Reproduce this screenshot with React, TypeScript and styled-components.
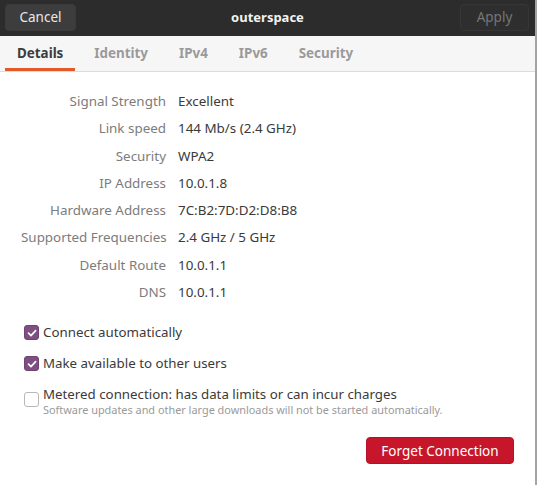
import React from "react";
import styled, { createGlobalStyle } from "styled-components";

const Global = createGlobalStyle`
  html, body { margin: 0; padding: 0; background: #ffffff; }
  body { font-family: "Noto Sans", "Open Sans", sans-serif; }
  * { box-sizing: border-box; }
`;

const Page = styled.div`
  width: 540px;
  height: 485px;
  display: flex;
  background: #ffffff;
`;

const Dialog = styled.div`
  width: 537px;
  height: 485px;
  border-right: 2px solid #a3a3a3;
  display: flex;
  flex-direction: column;
  background: #ffffff;
`;

const HeaderBar = styled.div`
  height: 36px;
  background: #2c2c2c;
  display: flex;
  align-items: center;
  justify-content: space-between;
  padding: 0 6px 2px 5px;
  position: relative;
`;

const HeaderButton = styled.button<{ $disabled?: boolean }>`
  height: 27px;
  width: ${(p) => (p.$disabled ? "69px" : "71px")};
  padding: 0;
  border-radius: 4px;
  border: 1px solid ${(p) => (p.$disabled ? "#363636" : "#3b3b3b")};
  background: ${(p) => (p.$disabled ? "#2e2e2e" : "#3d3d3d")};
  color: ${(p) => (p.$disabled ? "#767676" : "#e8e8e8")};
  font-family: inherit;
  font-size: 13.5px;
`;

const Title = styled.div`
  position: absolute;
  left: 0;
  right: 0;
  top: 8px;
  text-align: center;
  color: #f2f2f2;
  font-weight: 700;
  font-size: 13px;
  pointer-events: none;
`;

const TabBar = styled.div`
  height: 36px;
  background: #f6f6f6;
  border-bottom: 1px solid #dcdcdc;
  display: flex;
  padding-left: 5px;
`;

const Tab = styled.div<{ $active?: boolean }>`
  height: 100%;
  display: flex;
  align-items: center;
  padding: 2px 12px 0 12px;
  margin-right: 7px;
  font-size: 13.4px;
  font-weight: 700;
  color: ${(p) => (p.$active ? "#3c3c3c" : "#9a9a9a")};
  border-bottom: 3px solid ${(p) => (p.$active ? "#e05a2a" : "transparent")};
`;

const Content = styled.div`
  flex: 1;
  display: flex;
  flex-direction: column;
  padding: 19px 21px 0 21px;
`;

const InfoGrid = styled.div`
  display: grid;
  grid-template-columns: 145px auto;
  column-gap: 12px;
  row-gap: 7px;
  font-size: 13.4px;
  line-height: 20.3px;
`;

const Label = styled.div`
  text-align: right;
  color: #7c7c7c;
  white-space: nowrap;
`;

const Value = styled.div`
  color: #3a3a3a;
  white-space: nowrap;
`;

const Checks = styled.div`
  margin-top: 20px;
  display: flex;
  flex-direction: column;
  gap: 10px;
  padding-left: 3px;
`;

const CheckRow = styled.div<{ $center?: boolean }>`
  display: flex;
  align-items: ${(p) => (p.$center ? "center" : "flex-start")};
  gap: 4px;
`;

const Box = styled.div<{ $checked?: boolean }>`
  width: 15px;
  height: 15px;
  margin-top: ${(p) => (p.$checked ? "3px" : "0")};
  flex: none;
  border-radius: 3px;
  background: ${(p) => (p.$checked ? "#7d4f82" : "#ffffff")};
  border: 1px solid ${(p) => (p.$checked ? "#6e4473" : "#b8b8b8")};
  display: flex;
  align-items: center;
  justify-content: center;
`;

const CheckText = styled.div`
  display: flex;
  flex-direction: column;
`;

const CheckLabel = styled.div`
  font-size: 13.3px;
  line-height: 21px;
  color: #3a3a3a;
  white-space: nowrap;
`;

const CheckSub = styled.div`
  font-size: 10.9px;
  line-height: 11px;
  margin-top: -1px;
  color: #9a9a9a;
  white-space: nowrap;
`;

const Footer = styled.div`
  display: flex;
  justify-content: flex-end;
  margin-top: 22px;
`;

const DangerButton = styled.button`
  height: 27px;
  width: 148px;
  border-radius: 4px;
  border: 1px solid #b01328;
  background: #c7162b;
  color: #ffffff;
  font-family: inherit;
  font-size: 13.5px;
`;

const Check = () => (
  <svg width="10" height="10" viewBox="0 0 10 10">
    <path d="M1.5 5.2 L4 7.6 L8.6 2.6" stroke="#ffffff" strokeWidth="1.7" fill="none" strokeLinecap="round" strokeLinejoin="round" />
  </svg>
);

const rows: [string, string][] = [
  ["Signal Strength", "Excellent"],
  ["Link speed", "144 Mb/s (2.4 GHz)"],
  ["Security", "WPA2"],
  ["IP Address", "10.0.1.8"],
  ["Hardware Address", "7C:B2:7D:D2:D8:B8"],
  ["Supported Frequencies", "2.4 GHz / 5 GHz"],
  ["Default Route", "10.0.1.1"],
  ["DNS", "10.0.1.1"],
];

const tabs = ["Details", "Identity", "IPv4", "IPv6", "Security"];

export default function App() {
  return (
    <Page>
      <Global />
      <Dialog>
        <HeaderBar>
          <HeaderButton>Cancel</HeaderButton>
          <Title>outerspace</Title>
          <HeaderButton $disabled>Apply</HeaderButton>
        </HeaderBar>
        <TabBar>
          {tabs.map((t, i) => (
            <Tab key={t} $active={i === 0}>{t}</Tab>
          ))}
        </TabBar>
        <Content>
          <InfoGrid>
            {rows.map(([l, v]) => (
              <React.Fragment key={l}>
                <Label>{l}</Label>
                <Value>{v}</Value>
              </React.Fragment>
            ))}
          </InfoGrid>
          <Checks>
            <CheckRow>
              <Box $checked><Check /></Box>
              <CheckText><CheckLabel>Connect automatically</CheckLabel></CheckText>
            </CheckRow>
            <CheckRow>
              <Box $checked><Check /></Box>
              <CheckText><CheckLabel>Make available to other users</CheckLabel></CheckText>
            </CheckRow>
            <CheckRow $center>
              <Box />
              <CheckText>
                <CheckLabel>Metered connection: has data limits or can incur charges</CheckLabel>
                <CheckSub>Software updates and other large downloads will not be started automatically.</CheckSub>
              </CheckText>
            </CheckRow>
          </Checks>
          <Footer>
            <DangerButton>Forget Connection</DangerButton>
          </Footer>
        </Content>
      </Dialog>
    </Page>
  );
}
